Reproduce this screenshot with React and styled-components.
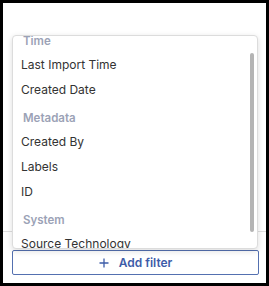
import React, { useLayoutEffect, useRef } from 'react';
import styled, { createGlobalStyle } from 'styled-components';

const GlobalStyle = createGlobalStyle`
    html, body {
        margin: 0;
        padding: 0;
        background: #fff;
    }
    body {
        font-family: Inter, "Noto Sans", "Liberation Sans", sans-serif;
    }
`

const Frame = styled.div`
    position: relative;
    width: 269px;
    height: 286px;
    box-sizing: border-box;
    border: 3px solid #000;
    background: #fff;
    overflow: hidden;
    display: flex;
    flex-direction: column;
    justify-content: flex-end;
`

const Divider = styled.div`
    height: 1px;
    background-color: #dedede;
`

const Footer = styled.div`
    padding: 18px 7px 8px 9px;
`

const AddButton = styled.button`
    width: 100%;
    height: 25px;
    display: flex;
    align-items: center;
    justify-content: center;
    gap: 10px;
    background: #fff;
    border: 1px solid #5470b0;
    border-radius: 2px;
    color: #3d5ca8;
    font-family: Inter, "Liberation Sans", sans-serif;
    font-size: 12px;
    font-weight: 600;
    cursor: pointer;
    padding: 0;
`

const Menu = styled.div`
    position: absolute;
    left: 9px;
    top: 32px;
    width: 246px;
    height: 214px;
    box-sizing: border-box;
    background: #fff;
    border: 1px solid #dcdcdc;
    border-radius: 4px;
    box-shadow: 0 2px 6px rgba(0, 0, 0, 0.14);
    overflow: hidden;
`

const MenuScroll = styled.div`
    height: 100%;
    overflow-y: auto;
    padding: 4px 0;
    box-sizing: border-box;
    scrollbar-width: none;

    &::-webkit-scrollbar {
        display: none;
    }
`

const ScrollThumb = styled.div`
    position: absolute;
    right: 3px;
    top: 17px;
    width: 4px;
    height: 179px;
    border-radius: 2px;
    background-color: #b4b4b4;
`

const GroupLabel = styled.div`
    padding: 10px 10px 5px 10px;
    line-height: 12px;
    font-size: 11.5px;
    font-weight: 600;
    color: #9ba2b6;
`

const Item = styled.div`
    height: 25px;
    line-height: 25px;
    padding: 0 8px;
    font-size: 12px;
    color: #333;
    white-space: nowrap;
`

const groups = [
    { label: 'Time', items: ['Last Import Time', 'Created Date'] },
    { label: 'Metadata', items: ['Created By', 'Labels', 'ID'] },
    { label: 'System', items: ['Source Technology'] },
]

const PlusIcon = () => (
    <svg width="10" height="10" viewBox="0 0 10 10" fill="none">
        <path d="M5 0.5v9M0.5 5h9" stroke="currentColor" strokeWidth="1.3" />
    </svg>
)

const App = () => {
    const scrollRef = useRef(null);

    useLayoutEffect(() => {
        if (scrollRef.current) scrollRef.current.scrollTop = 15;
    }, []);

    return (
        <Frame>
            <GlobalStyle />
            <Divider />
            <Footer>
                <AddButton>
                    <PlusIcon />
                    Add filter
                </AddButton>
            </Footer>
            <Menu>
                <MenuScroll ref={scrollRef}>
                    {groups.map(group => (
                        <div key={group.label}>
                            <GroupLabel>{group.label}</GroupLabel>
                            {group.items.map(item => <Item key={item}>{item}</Item>)}
                        </div>
                    ))}
                </MenuScroll>
                <ScrollThumb />
            </Menu>
        </Frame>
    )
}

export default App;
